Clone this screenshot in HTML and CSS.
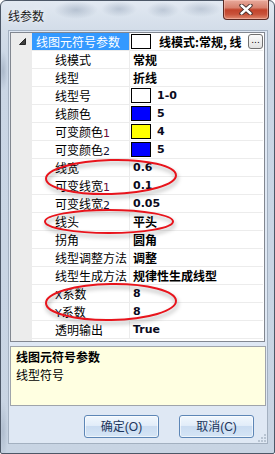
FILE: index.html
```html
<!DOCTYPE html>
<html lang="zh">
<head>
<meta charset="utf-8">
<title>线参数</title>
<link rel="stylesheet" href="styles.css">
</head>
<body>
<div class="window">
  <div class="titlebar">
    <span class="title">线参数</span>
    <div class="close">
      <svg width="14" height="11" viewBox="0 0 14 11">
        <path d="M2.5 1.5 L11.5 9.5 M11.5 1.5 L2.5 9.5" stroke="#3b2624" stroke-width="4.2" stroke-linecap="round"/>
        <path d="M2.5 1.5 L11.5 9.5 M11.5 1.5 L2.5 9.5" stroke="#ffffff" stroke-width="2.4" stroke-linecap="round"/>
      </svg>
    </div>
  </div>
  <div class="client">
    <div class="grid">
      <div class="gutter">
        <svg class="tri" width="7" height="7" viewBox="0 0 7 7"><polygon points="6.5,0.5 6.5,6.5 0.5,6.5" fill="#404040" stroke="#262626" stroke-width="1"/></svg>
      </div>
      <div class="rows">
        <div class="row cat">
          <div class="name">线图元符号参数</div>
          <div class="val"><span class="sw white"></span><span class="clip">线模式:常规, 线</span><span class="more">...</span></div>
        </div>
        <div class="row"><div class="name">线模式</div><div class="val">常规</div></div>
        <div class="row"><div class="name">线型</div><div class="val">折线</div></div>
        <div class="row"><div class="name">线型号</div><div class="val"><span class="sw white"></span><span class="num">1-0</span></div></div>
        <div class="row"><div class="name">线颜色</div><div class="val"><span class="sw blue"></span><span class="num">5</span></div></div>
        <div class="row"><div class="name">可变颜色<span class="d red">1</span></div><div class="val"><span class="sw yellow"></span><span class="num">4</span></div></div>
        <div class="row"><div class="name">可变颜色<span class="d">2</span></div><div class="val"><span class="sw blue"></span><span class="num">5</span></div></div>
        <div class="row"><div class="name">线宽</div><div class="val"><span class="num">0.6</span></div></div>
        <div class="row"><div class="name">可变线宽<span class="d red">1</span></div><div class="val"><span class="num">0.1</span></div></div>
        <div class="row"><div class="name">可变线宽<span class="d">2</span></div><div class="val"><span class="num">0.05</span></div></div>
        <div class="row"><div class="name">线头</div><div class="val">平头</div></div>
        <div class="row"><div class="name">拐角</div><div class="val">圆角</div></div>
        <div class="row"><div class="name">线型调整方法</div><div class="val">调整</div></div>
        <div class="row"><div class="name">线型生成方法</div><div class="val">规律性生成线型</div></div>
        <div class="row"><div class="name"><span class="d">X</span>系数</div><div class="val"><span class="num">8</span></div></div>
        <div class="row"><div class="name"><span class="d">Y</span>系数</div><div class="val"><span class="num">8</span></div></div>
        <div class="row"><div class="name">透明输出</div><div class="val"><span class="num">True</span></div></div>
      </div>
    </div>
    <div class="desc">
      <div class="desc-title">线图元符号参数</div>
      <div class="desc-text">线型符号</div>
    </div>
    <div class="buttons">
      <button class="btn">确定<span class="lat">(O)</span></button>
      <button class="btn">取消<span class="lat">(C)</span></button>
    </div>
    <svg class="grip" width="8" height="8" viewBox="0 0 8 8">
      <rect x="6" y="0" width="2" height="2" fill="#b8c4d2"/>
      <rect x="3" y="3" width="2" height="2" fill="#b8c4d2"/>
      <rect x="6" y="3" width="2" height="2" fill="#b8c4d2"/>
      <rect x="0" y="6" width="2" height="2" fill="#b8c4d2"/>
      <rect x="3" y="6" width="2" height="2" fill="#b8c4d2"/>
      <rect x="6" y="6" width="2" height="2" fill="#b8c4d2"/>
    </svg>
  </div>
  <svg class="marks" width="275" height="454" viewBox="0 0 275 454">
    <ellipse cx="111" cy="177" rx="65" ry="17" transform="rotate(-1.5 111 177)"/>
    <ellipse cx="109" cy="221.5" rx="64" ry="11.5"/>
    <ellipse cx="111" cy="302" rx="65" ry="18" transform="rotate(-1 111 302)"/>
  </svg>
</div>
</body>
</html>
```

FILE: styles.css
```css
* { box-sizing: border-box; }
html, body { margin: 0; padding: 0; }
body {
  width: 275px;
  height: 454px;
  overflow: hidden;
  background: #ffffff;
  font-family: "Noto Sans CJK SC", "Liberation Sans", sans-serif;
  font-size: 12px;
  color: #000;
}
.window {
  position: relative;
  width: 275px;
  height: 454px;
  border: 1px solid #4c5767;
  border-radius: 6px 6px 2px 2px;
  display: flex;
  flex-direction: column;
  background:
    radial-gradient(ellipse 22px 9px at 75px 9px, rgba(150,165,185,0.55), rgba(150,165,185,0)),
    radial-gradient(ellipse 18px 8px at 118px 8px, rgba(150,165,185,0.5), rgba(150,165,185,0)),
    radial-gradient(ellipse 16px 8px at 162px 9px, rgba(150,165,185,0.45), rgba(150,165,185,0)),
    radial-gradient(ellipse 20px 8px at 200px 8px, rgba(150,165,185,0.45), rgba(150,165,185,0)),
    radial-gradient(ellipse 5px 20px at 2px 70px, rgba(140,155,175,0.5), rgba(140,155,175,0)),
    radial-gradient(ellipse 5px 30px at 2px 430px, rgba(140,155,175,0.4), rgba(140,155,175,0)),
    linear-gradient(to bottom, #e2e9f2 0px, #d3dde9 28px, #cad6e5 60px, #c8d4e3 100%);
}
.titlebar {
  height: 29px;
  flex: none;
  display: flex;
  align-items: flex-start;
  padding-left: 7px;
  padding-right: 5px;
}
.title {
  margin-top: 6px;
  line-height: 17px;
  font-size: 12px;
  color: #1a1a1a;
  text-shadow: 0 0 6px rgba(255,255,255,0.9);
}
.close {
  margin-left: auto;
  margin-top: -1px;
  width: 46px;
  height: 20px;
  border: 1px solid #5a2a24;
  border-top: none;
  border-radius: 0 0 4px 4px;
  background: linear-gradient(to bottom, #e8aa9c 0%, #d8826f 40%, #c2432b 52%, #c8523a 75%, #e08a70 100%);
  box-shadow: inset 0 0 0 1px rgba(255,210,200,0.45);
  display: flex;
  align-items: center;
  justify-content: center;
}
.client {
  margin: 0 6px 0 7px;
  height: 414px;
  flex: none;
  border: 1px solid #a3b0c0;
  background: #dfe8f4;
  display: flex;
  flex-direction: column;
  position: relative;
}
.grid {
  margin: 1px 2px 0 1px;
  height: 310px;
  flex: none;
  border: 1px solid #828790;
  background: #ffffff;
  display: flex;
}
.gutter {
  width: 21px;
  flex: none;
  background: #ececec;
  position: relative;
}
.tri { position: absolute; left: 8px; top: 5px; }
.rows {
  width: 231px;
  display: flex;
  flex-direction: column;
}
.row {
  height: 18px;
  display: grid;
  grid-template-columns: 98px 133px;
  border-bottom: 1px solid #ececec;
}
.name {
  border-right: 1px solid #ececec;
  padding-left: 23px;
  line-height: 17px;
  white-space: nowrap;
  overflow: hidden;
}
.row.cat .name {
  background: #3399ff;
  color: #fff;
  padding-left: 4px;
  border-right-color: #d9d9d9;
}
.val {
  display: flex;
  align-items: flex-start;
  padding-left: 3px;
  line-height: 17px;
  font-weight: 700;
  white-space: nowrap;
  overflow: hidden;
  min-width: 0;
}
.sw {
  width: 20px;
  height: 15px;
  margin-top: 1px;
  margin-left: -2px;
  margin-right: 6px;
  border: 1px solid #000;
  flex: none;
}
.sw.white { background: #ffffff; }
.sw.blue { background: #0000ff; }
.sw.yellow { background: #ffff00; }
.num {
  font-family: "DejaVu Sans", "Liberation Sans", sans-serif;
  font-size: 11px;
  font-weight: 700;
  color: #0a0a20;
}
.clip {
  flex: 1;
  min-width: 0;
  overflow: hidden;
  margin-left: 2px;
}
.more {
  flex: none;
  width: 15px;
  height: 15px;
  margin-top: 1px;
  border: 1px solid #707070;
  border-radius: 3px;
  background: linear-gradient(to bottom, #fbfbfb, #e2e2e2);
  font-family: "DejaVu Sans", sans-serif;
  font-size: 9px;
  font-weight: 400;
  line-height: 10px;
  text-align: center;
  color: #000;
}
.d {
  font-family: "DejaVu Sans", "Liberation Sans", sans-serif;
  font-size: 11px;
  color: #101030;
}
.d.red { color: #6a0a3a; }
.desc {
  margin: 4px 0 0 1px;
  width: 256px;
  height: 60px;
  flex: none;
  border: 1px solid #9fa4ab;
  background: #ffffe1;
  padding: 1px 0 0 5px;
  line-height: 18px;
}
.desc-title { font-weight: 700; }
.buttons {
  margin-top: 9px;
  height: 23px;
  flex: none;
  display: flex;
  justify-content: flex-end;
  gap: 20px;
  padding-right: 13px;
}
.btn {
  width: 75px;
  height: 23px;
  margin: 0;
  padding: 0;
  border: 1px solid #5d86b6;
  border-radius: 3px;
  background: linear-gradient(to bottom, #f1f7fd 0%, #e2edf9 45%, #cadcf1 50%, #d5e5f6 100%);
  box-shadow: inset 0 0 0 1px rgba(255,255,255,0.6);
  font-family: "Noto Sans CJK SC", sans-serif;
  font-size: 12px;
  color: #1c355c;
  line-height: 20px;
}
.lat { font-family: "Liberation Sans", sans-serif; }
.grip {
  position: absolute;
  right: 1px;
  bottom: 1px;
}
.marks {
  position: absolute;
  left: -1px;
  top: -1px;
  pointer-events: none;
  filter: drop-shadow(1px 3px 2px rgba(0,0,0,0.35));
}
.marks ellipse {
  fill: none;
  stroke: #e8141c;
  stroke-width: 2;
}
```
